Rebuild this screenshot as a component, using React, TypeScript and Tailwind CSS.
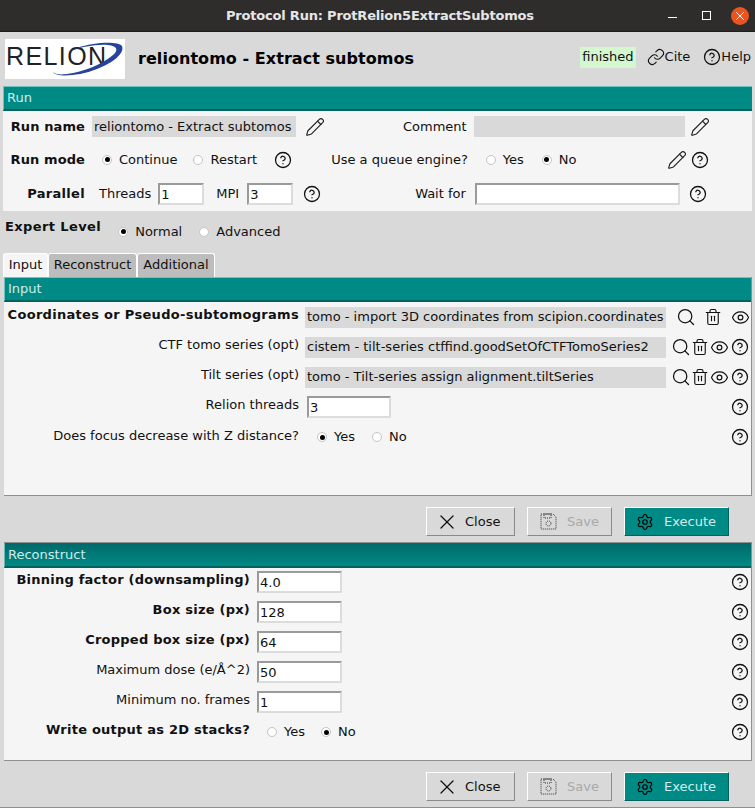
import { CircleHelp, Eye, Link, Pencil, Search, Settings, Trash2, X } from "lucide-react";
import type { ReactNode } from "react";

function Help({ className = "" }: { className?: string }) {
    return <CircleHelp size={18} strokeWidth={1.7} className={`shrink-0 text-[#111] ${className}`} />;
}

function Edit({ className = "" }: { className?: string }) {
    return <Pencil size={20} strokeWidth={1.4} className={`shrink-0 text-[#222] ${className}`} />;
}

function Radio({ label, on, className = "" }: { label: string; on?: boolean; className?: string }) {
    return (
        <span className={`flex items-center gap-[7px] ${className}`}>
            <span className="flex h-[10px] w-[10px] items-center justify-center rounded-full border border-[#c4c4c4] bg-white">
                {on && <span className="h-[5px] w-[5px] rounded-full bg-black" />}
            </span>
            {label}
        </span>
    );
}

function Input({ value, className = "" }: { value: string; className?: string }) {
    return (
        <span className={`flex h-[22px] items-center border-2 border-t-[#9a9a9a] border-l-[#9a9a9a] border-r-[#dcdcdc] border-b-[#dcdcdc] bg-white pl-[1px] leading-none ${className}`}>
            {value}
        </span>
    );
}

function Teal({ label, sunken }: { label: string; sunken?: boolean }) {
    return (
        <div
            className={`flex h-[25px] shrink-0 items-center border-b-2 border-l border-b-[#00625e] pl-[3px] text-[#d2ecea] ${
                sunken
                    ? "border-l-[#6fb5b2] bg-gradient-to-b from-[#00696a] to-[#008a85]"
                    : "border-t border-t-[#74c0bc] border-l-[#74c0bc] bg-[#008a85]"
            }`}
        >
            {label}
        </div>
    );
}

function Button({ icon, label, className = "" }: { icon: ReactNode; label: string; className?: string }) {
    return (
        <button className={`flex h-[29px] items-center border border-t-white border-l-white border-r-[#8a8a8a] border-b-[#8a8a8a] ${className}`}>
            {icon}
            {label}
        </button>
    );
}

function FloppyDotted() {
    return (
        <svg className="mr-[10px]" width="17" height="17" viewBox="0 0 17 17" fill="none" stroke="#333" strokeWidth="1" strokeDasharray="1 1">
            <path d="M1 1H13L16 4V16H1Z" />
            <rect x="4" y="1" width="7" height="4" />
            <circle cx="8.5" cy="10.5" r="2.5" />
        </svg>
    );
}

function Actions({ className = "" }: { className?: string }) {
    return (
        <div className={`flex shrink-0 items-start justify-end gap-[12px] pr-[26px] pt-[11px] ${className}`}>
            <Button label="Close" className="w-[89px] pl-[8px]" icon={<X size={24} strokeWidth={1.3} className="mr-[6px]" />} />
            <Button label="Save" className="w-[85px] pl-[12px] text-[#a9a9a9]" icon={<FloppyDotted />} />
            <Button
                label="Execute"
                className="w-[105px] border-t-[#5fb0ac] border-l-[#5fb0ac] border-r-[#00625e] border-b-[#00625e] bg-[#008a85] pl-[11px] text-[#d2ecea]"
                icon={<Settings size={18} strokeWidth={1.6} className="mr-[10px] text-black" />}
            />
        </div>
    );
}

function Logo() {
    return (
        <div className="relative h-[40px] w-[120px] shrink-0 overflow-hidden bg-white">
            <span className="absolute left-[1px] top-[2px] font-['Liberation_Sans',sans-serif] text-[25px] leading-[30px] tracking-[1.4px] text-[#222]">
                RELION
            </span>
            <svg className="absolute left-0 top-0" width="120" height="40" viewBox="0 0 120 40" fill="none">
                <path d="M48 33C50 38 72 38 92 30C108 24 120 14 117 7C114 3 100 3 88 5C76 7 68 10 63 13C74 8 92 5 103 6C112 7 114 11 108 16C98 25 78 33 62 35C54 36 50 35 48 33Z" fill="#25439b" />
            </svg>
        </div>
    );
}

function FileRow({ label, value, bold, wideTools }: { label: string; value: string; bold?: boolean; wideTools?: boolean }) {
    return (
        <div className="flex h-[30px] items-center">
            <span className={`w-[295px] shrink-0 pb-[5px] text-right ${bold ? "font-bold tracking-[0.3px]" : ""}`}>{label}</span>
            <span className="ml-[6px] flex h-[21px] w-[361px] shrink-0 items-center bg-[#d9d9d9] pl-[2px]">{value}</span>
            {wideTools ? (
                <span className="ml-[10px] flex items-center">
                    <Search size={20} strokeWidth={1.5} />
                    <Trash2 size={18} strokeWidth={1.5} className="ml-[8px]" />
                    <Eye size={19} strokeWidth={1.5} className="ml-[9px]" />
                </span>
            ) : (
                <span className="ml-[5px] flex items-center">
                    <Search size={20} strokeWidth={1.5} />
                    <Trash2 size={18} strokeWidth={1.5} />
                    <Eye size={19} strokeWidth={1.5} className="ml-[1px]" />
                    <Help className="ml-[2px]" />
                </span>
            )}
        </div>
    );
}

function FieldRow({ label, value, bold }: { label: string; value: string; bold?: boolean }) {
    return (
        <div className="flex h-[30px] items-center">
            <span className={`w-[246px] shrink-0 pb-[5px] text-right ${bold ? "font-bold tracking-[0.23px]" : ""}`}>{label}</span>
            <Input value={value} className="ml-[7px] w-[85px]" />
            <Help className="ml-auto mr-[2px]" />
        </div>
    );
}

export default function App() {
    return (
        <div className="flex h-[808px] w-[755px] flex-col overflow-hidden whitespace-nowrap bg-[#d9d9d9] font-['DejaVu_Sans',sans-serif] text-[13px] text-[#111]">
            <div className="flex h-[32px] shrink-0 items-center border-b border-b-[#1d1b1b] bg-[#2f2c2c] pr-[6px]">
                <span className="ml-[226px] text-[13px] font-bold tracking-[-0.2px] text-[#e6e6e6]">Protocol Run: ProtRelion5ExtractSubtomos</span>
                <span className="ml-auto flex items-center">
                    <span className="mt-[4px] h-[1px] w-[9px] bg-white" />
                    <span className="ml-[25px] h-[9px] w-[9px] border border-white" />
                    <span className="ml-[20px] flex h-[18px] w-[18px] items-center justify-center rounded-full bg-[#e95420]">
                        <X size={14} strokeWidth={1.6} className="text-white" />
                    </span>
                </span>
            </div>

            <div className="flex h-[54px] shrink-0 items-center pl-[5px]">
                <Logo />
                <span className="ml-[13px] text-[16px] font-bold tracking-[0.05px] text-black">reliontomo - Extract subtomos</span>
                <span className="mb-[4px] ml-auto mr-[4px] flex items-center">
                    <span className="flex h-[21px] items-center bg-[#d4f7d0] px-[2px]">finished</span>
                    <Link size={18} strokeWidth={1.5} className="ml-[11px]" />
                    <span>Cite</span>
                    <Help className="ml-[13px]" />
                    <span>Help</span>
                </span>
            </div>

            <div className="ml-[3px] mr-[3px] flex shrink-0 flex-col">
                <Teal label="Run" />
                <div className="flex h-[100px] flex-col bg-[#f5f5f5]">
                    <div className="mt-[5px] flex h-[21px] items-center">
                        <span className="w-[82px] text-right font-bold tracking-[0.1px]">Run name</span>
                        <span className="ml-[7px] flex h-[21px] w-[204px] items-center bg-[#d9d9d9] pl-[2px]">reliontomo - Extract subtomos</span>
                        <Edit className="ml-[9px]" />
                        <span className="ml-[78px]">Comment</span>
                        <span className="ml-[7px] h-[21px] w-[211px] bg-[#d9d9d9]" />
                        <Edit className="ml-[5px]" />
                    </div>
                    <div className="mt-[12px] flex h-[21px] items-center">
                        <span className="w-[82px] text-right font-bold tracking-[0.1px]">Run mode</span>
                        <Radio label="Continue" on className="ml-[17px]" />
                        <Radio label="Restart" className="ml-[16px]" />
                        <Help className="ml-[17px]" />
                        <span className="ml-[39px]">Use a queue engine?</span>
                        <Radio label="Yes" className="ml-[18px]" />
                        <Radio label="No" on className="ml-[18px]" />
                        <Edit className="ml-[90px]" />
                        <Help className="ml-[4px]" />
                    </div>
                    <div className="mt-[13px] flex h-[22px] items-center">
                        <span className="w-[82px] text-right font-bold tracking-[0.3px]">Parallel</span>
                        <span className="ml-[14px]">Threads</span>
                        <Input value="1" className="ml-[7px] w-[46px]" />
                        <span className="ml-[12px]">MPI</span>
                        <Input value="3" className="ml-[8px] w-[46px]" />
                        <Help className="ml-[10px]" />
                        <span className="ml-[94px]">Wait for</span>
                        <Input value="" className="ml-[9px] w-[205px]" />
                        <Help className="ml-[9px]" />
                    </div>
                </div>
            </div>

            <div className="flex h-[41px] shrink-0 items-start pl-[5px]">
                <span className="mt-[6px] font-bold tracking-[0.4px]">Expert Level</span>
                <Radio label="Normal" on className="ml-[17px] mt-[11px]" />
                <Radio label="Advanced" className="ml-[17px] mt-[11px]" />
            </div>

            <div className="ml-[3px] flex h-[25px] shrink-0 items-end">
                <span className="flex h-[24px] w-[45px] items-center justify-center rounded-t-[3px] border border-b-0 border-white bg-[#f5f5f5] pb-[2px]">Input</span>
                <span className="flex h-[24px] w-[89px] items-center justify-center rounded-t-[3px] border border-b-0 border-white bg-[#bdbdbd] pb-[2px]">Reconstruct</span>
                <span className="flex h-[24px] w-[78px] items-center justify-center rounded-t-[3px] border border-b-0 border-white bg-[#bdbdbd] pb-[2px]">Additional</span>
            </div>

            <div className="ml-[4px] mr-[3px] flex h-[219px] shrink-0 flex-col border-r border-b border-[#8f8f8f] bg-[#f5f5f5]">
                <Teal label="Input" />
                <div className="flex flex-col">
                    <FileRow bold wideTools label="Coordinates or Pseudo-subtomograms" value="tomo - import 3D coordinates from scipion.coordinates" />
                    <FileRow label="CTF tomo series (opt)" value="cistem - tilt-series ctffind.goodSetOfCTFTomoSeries2" />
                    <FileRow label="Tilt series (opt)" value="tomo - Tilt-series assign alignment.tiltSeries" />
                    <div className="flex h-[30px] items-center">
                        <span className="w-[295px] shrink-0 pb-[5px] text-right">Relion threads</span>
                        <Input value="3" className="ml-[8px] w-[84px]" />
                        <Help className="ml-auto mr-[2px]" />
                    </div>
                    <div className="flex h-[30px] items-center">
                        <span className="w-[295px] shrink-0 pb-[3px] text-right">Does focus decrease with Z distance?</span>
                        <Radio label="Yes" on className="ml-[18px]" />
                        <Radio label="No" className="ml-[17px]" />
                        <Help className="ml-auto mr-[2px]" />
                    </div>
                </div>
            </div>

            <Actions className="h-[46px]" />

            <div className="ml-[4px] mr-[3px] flex h-[219px] shrink-0 flex-col border-t border-r border-b border-[#8f8f8f] bg-[#f5f5f5]">
                <Teal label="Reconstruct" sunken />
                <div className="mt-[-1px] flex flex-col">
                    <FieldRow bold label="Binning factor (downsampling)" value="4.0" />
                    <FieldRow bold label="Box size (px)" value="128" />
                    <FieldRow bold label="Cropped box size (px)" value="64" />
                    <FieldRow label="Maximum dose (e/Å^2)" value="50" />
                    <FieldRow label="Minimum no. frames" value="1" />
                    <div className="flex h-[30px] items-center">
                        <span className="w-[246px] shrink-0 pb-[5px] text-right font-bold tracking-[0.23px]">Write output as 2D stacks?</span>
                        <Radio label="Yes" className="ml-[17px]" />
                        <Radio label="No" on className="ml-[16px]" />
                        <Help className="ml-auto mr-[2px]" />
                    </div>
                </div>
            </div>

            <Actions className="h-[47px] border-b border-b-[#8f8f8f]" />
        </div>
    );
}
